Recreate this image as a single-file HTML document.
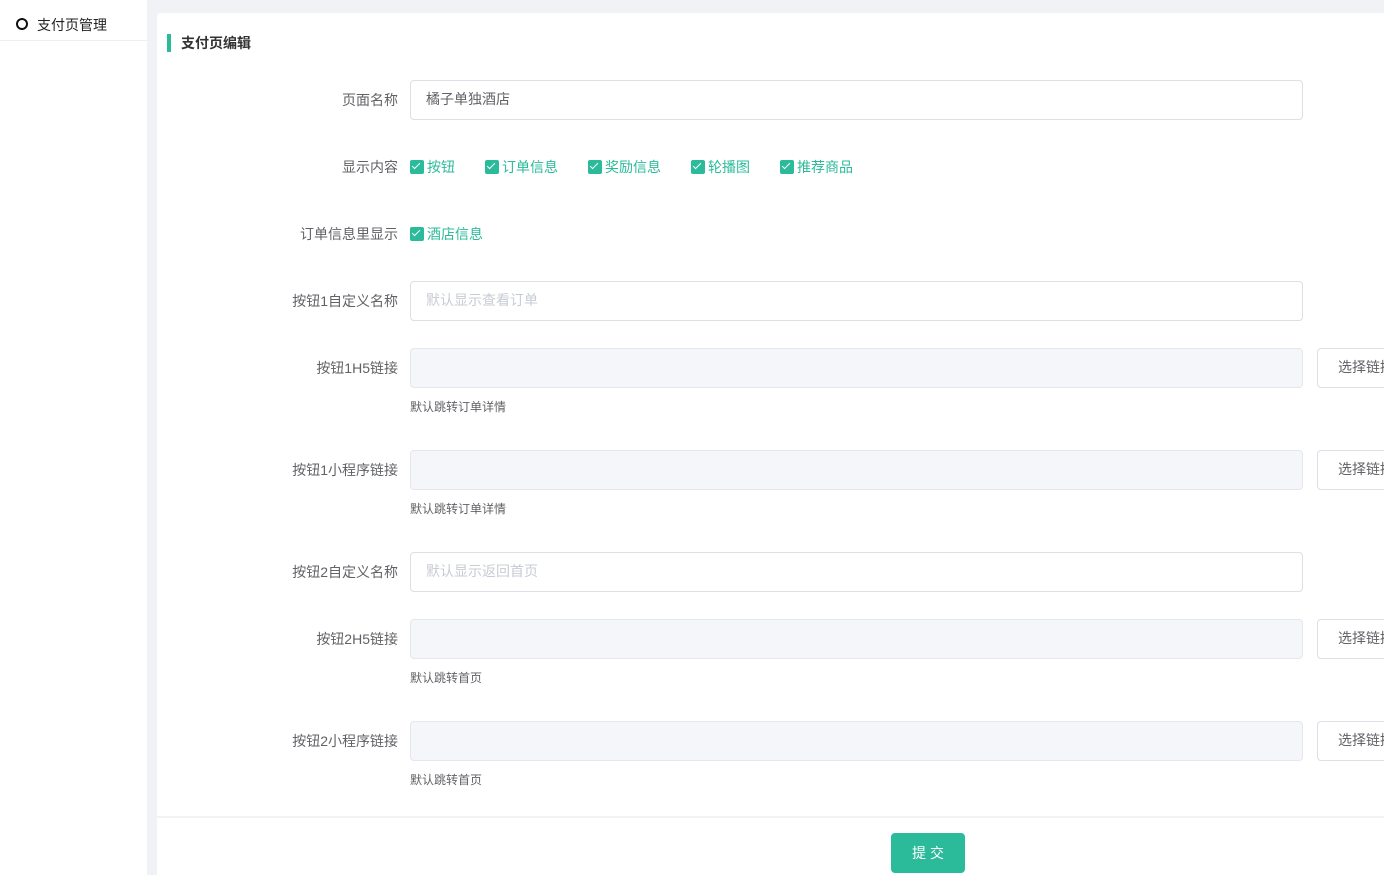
<!DOCTYPE html>
<html><head><meta charset="utf-8"><style>
*{box-sizing:border-box;margin:0;padding:0}
body{width:1384px;height:875px;overflow:hidden;background:#f0f2f5;font-family:"Liberation Sans","Noto Sans CJK SC",sans-serif;font-size:14px;color:#606266;position:relative}
.side{position:absolute;left:0;top:0;width:147px;height:875px;background:#fff}
.side .top{position:absolute;left:0;top:5px;width:147px;height:36px;border-bottom:1px solid #ebeef5;border-radius:0 8px 0 0;color:#222;font-size:14px}
.side .top span{position:absolute;left:37px;top:10px}
.side .top i{position:absolute;left:16px;top:13px;width:12px;height:12px;border:2px solid #111;border-radius:50%}
.main{position:absolute;left:157px;top:13px;width:1227px;height:803px;background:#fff;border-radius:4px 0 0 0}
.title{position:absolute;left:167px;top:34px;height:18px;border-left:4px solid #2bbb9a;padding-left:10px;font-weight:bold;color:#333;font-size:14px;line-height:19px}
.foot{position:absolute;left:157px;top:818px;width:1227px;height:57px;background:#fff}
.lbl{position:absolute;right:986px;font-size:14px;color:#606266;white-space:nowrap}
.inp{position:absolute;left:410px;width:893px;height:40px;border:1px solid #dcdfe6;border-radius:4px;background:#fff;padding-left:15px;line-height:37px}
.inp.dis{background:#f5f6fa;border-color:#e4e7ed}
.ph{color:#c8ccd4}
.btn{position:absolute;left:1317px;width:90px;height:40px;border:1px solid #dcdfe6;border-radius:4px;background:#fff;padding-left:20px;line-height:37px;color:#606266}
.hint{position:absolute;left:410px;font-size:12px;color:#606266}
.cb{position:absolute;color:#2bbb9a;font-size:14px;white-space:nowrap}
.cb i{display:inline-block;width:14px;height:14px;background:#2bbb9a;border-radius:2px;vertical-align:-2px;margin-right:3px;position:relative}
.cb i:after{content:"";position:absolute;left:4px;top:1px;width:3px;height:7px;border:solid #fff;border-width:0 1.5px 1.5px 0;transform:rotate(45deg)}
.sub{position:absolute;left:891px;top:833px;width:74px;height:40px;background:#2bbb9a;border-radius:4px;color:#fff;text-align:center;line-height:40px;letter-spacing:4px;padding-left:4px}
</style></head><body>
<div class="side"><div class="top"><i></i><span>支付页管理</span></div></div>
<div class="main"></div>
<div class="foot"></div>
<div class="title">支付页编辑</div>

<div class="lbl" style="top:90px">页面名称</div>
<div class="inp" style="top:80px">橘子单独酒店</div>

<div class="lbl" style="top:157px">显示内容</div>
<div class="cb" style="left:410px;top:157px"><i></i>按钮</div>
<div class="cb" style="left:485px;top:157px"><i></i>订单信息</div>
<div class="cb" style="left:588px;top:157px"><i></i>奖励信息</div>
<div class="cb" style="left:691px;top:157px"><i></i>轮播图</div>
<div class="cb" style="left:780px;top:157px"><i></i>推荐商品</div>

<div class="lbl" style="top:224px">订单信息里显示</div>
<div class="cb" style="left:410px;top:224px"><i></i>酒店信息</div>

<div class="lbl" style="top:291px">按钮1自定义名称</div>
<div class="inp" style="top:281px"><span class="ph">默认显示查看订单</span></div>

<div class="lbl" style="top:358px">按钮1H5链接</div>
<div class="inp dis" style="top:348px"></div>
<div class="btn" style="top:348px">选择链接</div>
<div class="hint" style="top:398px">默认跳转订单详情</div>

<div class="lbl" style="top:460px">按钮1小程序链接</div>
<div class="inp dis" style="top:450px"></div>
<div class="btn" style="top:450px">选择链接</div>
<div class="hint" style="top:500px">默认跳转订单详情</div>

<div class="lbl" style="top:562px">按钮2自定义名称</div>
<div class="inp" style="top:552px"><span class="ph">默认显示返回首页</span></div>

<div class="lbl" style="top:629px">按钮2H5链接</div>
<div class="inp dis" style="top:619px"></div>
<div class="btn" style="top:619px">选择链接</div>
<div class="hint" style="top:669px">默认跳转首页</div>

<div class="lbl" style="top:731px">按钮2小程序链接</div>
<div class="inp dis" style="top:721px"></div>
<div class="btn" style="top:721px">选择链接</div>
<div class="hint" style="top:771px">默认跳转首页</div>

<div class="sub">提交</div>
</body></html>
